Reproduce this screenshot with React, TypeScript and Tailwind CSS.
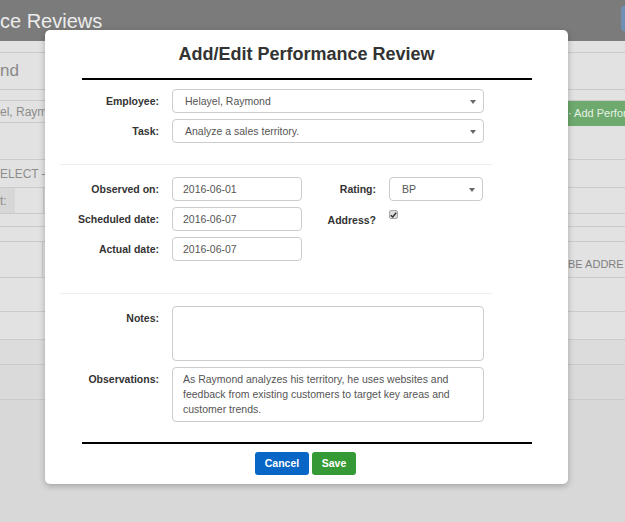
const font = { fontFamily: '"Liberation Sans", Arial, sans-serif' };

function Caret() {
  return (
    <svg width="6" height="4" viewBox="0 0 6 4" className="absolute right-[7px] top-[10px]">
      <path d="M0 0 L6 0 L3 4 Z" fill="#666" />
    </svg>
  );
}

function Select({ value, w }: { value: string; w: string }) {
  return (
    <div className={`relative h-[24px] ${w} rounded-[4px] border border-[#cccccc] bg-white pl-3 text-[10.5px] leading-[22px] text-[#555]`}>
      {value}
      <Caret />
    </div>
  );
}

function Input({ value }: { value: string }) {
  return (
    <div className="h-[24px] w-[130px] shrink-0 rounded-[4px] border border-[#cccccc] bg-white pl-[10px] text-[10.5px] leading-[22px] text-[#555]">
      {value}
    </div>
  );
}

function Label({ children, w = 'w-[127px]' }: { children: React.ReactNode; w?: string }) {
  return (
    <div className={`${w} shrink-0 pt-[5px] pr-[13px] text-right text-[10.5px] font-bold leading-[14px] text-[#333]`}>
      {children}
    </div>
  );
}

function BgRow({ h, left, right, className = '' }: { h: string; left?: React.ReactNode; right?: React.ReactNode; className?: string }) {
  return (
    <div className={`flex ${h} items-center justify-between border-b border-[#cbcbcb] ${className}`}>
      <div className="flex h-full items-center">{left}</div>
      <div className="flex h-full items-center">{right}</div>
    </div>
  );
}

export default function App() {
  return (
    <div className="relative h-[522px] w-[625px] overflow-hidden bg-[#d8d8d8]" style={font}>
      {/* Page behind the dialog */}
      <div className="flex h-[41px] items-center justify-between bg-[#7b7b7b]">
        <span className="pl-0 text-[20px] text-[#ececec]">ce Reviews</span>
        <div className="mt-[-4px] h-[25px] w-[4px] rounded-l-[3px] bg-[#6f8fb3]" />
      </div>
      <div className="bg-[#e2e2e2]">
        <BgRow h="h-[12px]" />
        <BgRow h="h-[37px]" left={<span className="text-[17px] text-[#8a8a8a]">nd</span>} />
        <BgRow h="h-[11px]" />
        <BgRow
          h="h-[22px]"
          left={<span className="text-[12px] text-[#8d8d8d]">el, Raym</span>}
          right={
            <div className="mt-[3px] flex h-[25px] w-[57px] items-center overflow-hidden whitespace-nowrap bg-[#6ea96e] text-[11px] text-[#e6f2e6]">
              · Add Perfor
            </div>
          }
        />
        <BgRow h="h-[37px]" />
        <BgRow h="h-[28px]" left={<span className="text-[12px] text-[#8d8d8d]">ELECT –</span>} />
        <BgRow
          h="h-[26px]"
          left={
            <div className="flex h-full w-[44px] items-center border-r border-[#cbcbcb]">
              <div className="flex h-full w-[15px] items-center bg-[#d7d7d7] text-[12px] text-[#8d8d8d]">t:</div>
            </div>
          }
        />
        <BgRow h="h-[13px]" />
        <BgRow h="h-[15px]" />
        <BgRow
          h="h-[36px]"
          left={<div className="h-full w-[43px] border-r border-[#cbcbcb]" />}
          right={<span className="mt-[10px] w-[57px] overflow-hidden whitespace-nowrap text-[11px] text-[#7f7f7f]">BE ADDRE</span>}
        />
        <BgRow h="h-[34px]" />
        <BgRow h="h-[28px]" />
        <BgRow h="h-[25px]" className="bg-[#dcdcdc]" />
        <BgRow h="h-[35px]" className="bg-[#dadada]" />
      </div>

      {/* Dialog */}
      <div className="absolute left-[45px] top-[30px] w-[523px] rounded-[5px] bg-white pb-[9px] shadow-[0_2px_6px_rgba(0,0,0,0.25)]">
        <h1 className="mt-[14px] text-center text-[18px] font-bold leading-[20px] text-[#333]">Add/Edit Performance Review</h1>
        <div className="ml-[37px] mt-[14px] h-[2px] w-[450px] bg-black" />

        <div className="mt-[9px] flex">
          <Label>Employee:</Label>
          <Select value="Helayel, Raymond" w="w-[312px]" />
        </div>
        <div className="mt-[6px] flex">
          <Label>Task:</Label>
          <Select value="Analyze a sales territory." w="w-[312px]" />
        </div>

        <div className="ml-[15px] mt-[21px] h-px w-[432px] bg-[#eeeeee]" />

        <div className="mt-[12px] flex">
          <Label>Observed on:</Label>
          <Input value="2016-06-01" />
          <Label w="w-[87px]">Rating:</Label>
          <Select value="BP" w="w-[94px]" />
        </div>
        <div className="mt-[6px] flex">
          <Label>Scheduled date:</Label>
          <Input value="2016-06-07" />
          <Label w="w-[87px]">
            <span className="relative top-[1px]">Address?</span>
          </Label>
          <div className="mt-[3px] flex h-[9px] w-[9px] items-center justify-center rounded-[2px] border border-[#a8a8a8] bg-[#dcdcdc]">
            <svg width="7" height="6" viewBox="0 0 7 6">
              <path d="M0.8 3.2 L2.7 5 L6.2 0.8" stroke="#333" strokeWidth="1.4" fill="none" />
            </svg>
          </div>
        </div>
        <div className="mt-[6px] flex">
          <Label>Actual date:</Label>
          <Input value="2016-06-07" />
        </div>

        <div className="ml-[15px] mt-[32px] h-px w-[432px] bg-[#eeeeee]" />

        <div className="mt-[12px] flex">
          <Label>Notes:</Label>
          <div className="h-[55px] w-[312px] rounded-[4px] border border-[#cccccc]" />
        </div>
        <div className="mt-[6px] flex">
          <Label>Observations:</Label>
          <div className="h-[55px] w-[312px] rounded-[4px] border border-[#cccccc] px-[10px] pt-[4px] text-[10.5px] leading-[15px] text-[#555]">
            As Raymond analyzes his territory, he uses websites and feedback from existing customers to target key areas and customer trends.
          </div>
        </div>

        <div className="ml-[37px] mt-[20px] h-[2px] w-[450px] bg-black" />

        <div className="mt-[8px] flex justify-center gap-[3px] pr-[2px]">
          <button className="h-[23px] w-[54px] rounded-[3px] bg-[#0866c6] text-[10.5px] font-bold text-white">Cancel</button>
          <button className="h-[23px] w-[44px] rounded-[3px] bg-[#359a35] text-[10.5px] font-bold text-white">Save</button>
        </div>
      </div>
    </div>
  );
}
